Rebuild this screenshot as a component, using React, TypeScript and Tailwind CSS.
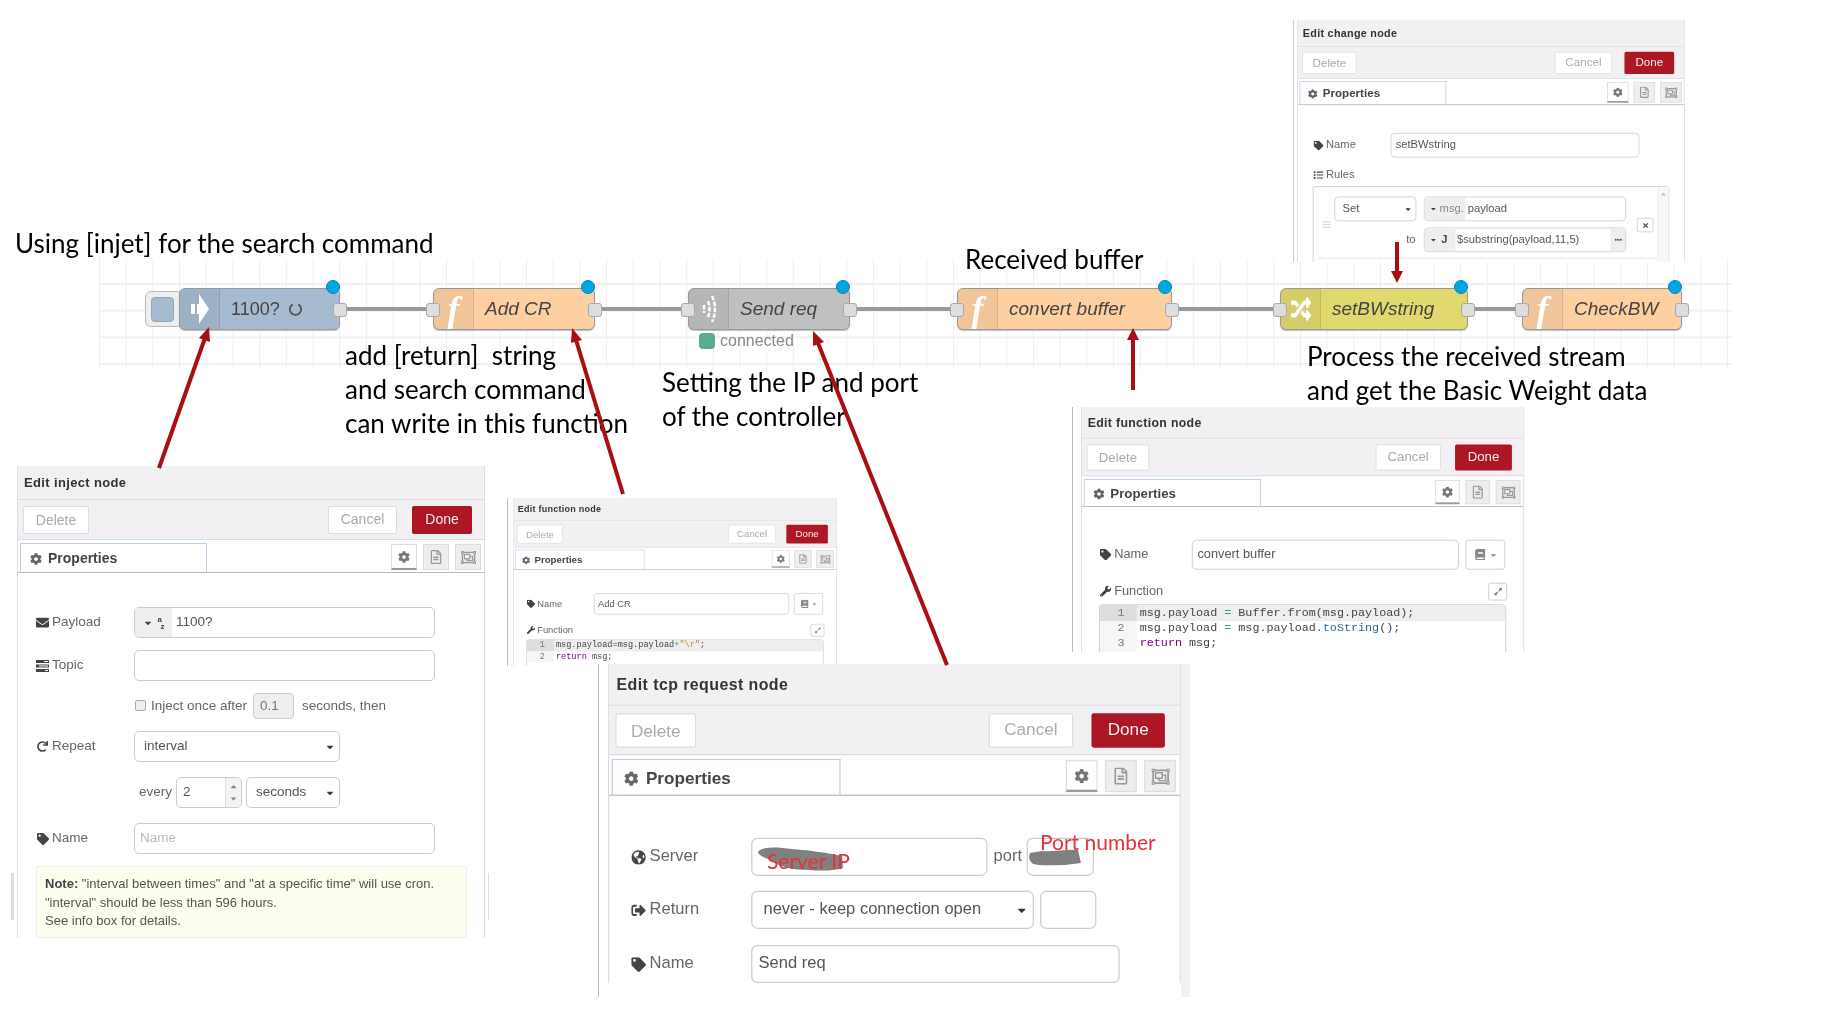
import type { ReactNode } from "react";
import {
  FaCaretDown, FaCaretUp, FaCog, FaEnvelope, FaRedo, FaTag, FaGlobeAmericas, FaSignOutAlt, FaWrench,
  FaBook, FaList, FaRegFileAlt, FaRegObjectGroup, FaRandom, FaTimes, FaEllipsisH, FaExpandAlt, FaBars,
} from "react-icons/fa";

const sans = "font-['Liberation_Sans',Arial,sans-serif]";

// One pasted "Edit ... node" window. Drawn at the inject window's size and scaled per copy.
function EditDialog({ title, box, scale, tabWidth = "w-[187px]", children }: {
  title: string; box: string; scale: string; tabWidth?: string; children: ReactNode;
}) {
  return (
    <div className={`absolute overflow-hidden bg-white ${box}`}>
      <div className={`w-[468px] origin-top-left bg-white border-x border-[#ddd] ${sans} ${scale}`}>
        <div className="h-[34px] bg-[#f3f0f4] border-b border-[#ddd] flex items-center pl-[6px] text-[13px] font-bold text-[#333] tracking-[0.35px]">
          {title}
        </div>
        <div className="h-[40px] bg-[#f3f0f4] border-b border-[#ddd] flex items-center justify-between pl-[5px] pr-[12px] text-[14px]">
          <div className="w-[66px] h-[28px] mt-[1px] bg-white border border-[#ddd] rounded-[2px] flex items-center justify-center text-[#aaa]">Delete</div>
          <div className="flex gap-[15px]">
            <div className="w-[69px] h-[28px] bg-white border border-[#ddd] rounded-[2px] flex items-center justify-center text-[#aaa]">Cancel</div>
            <div className="w-[60px] h-[28px] bg-[#ad1625] rounded-[2px] flex items-center justify-center text-[#eee]">Done</div>
          </div>
        </div>
        <div className="h-[33px] border-b border-[#b8bac2] flex justify-between pl-[2px] pr-[3px] pt-[3px]">
          <div className={`${tabWidth} h-[30px] border border-b-0 border-[#bcd0e8] flex items-center pl-[9px] gap-[6px] text-[14px] font-bold text-[#444]`}>
            <FaCog className="w-[12px] h-[12px] text-[#666]" /> Properties
          </div>
          <div className="flex gap-[6px] pt-[1px]">
            <div className="w-[26px] h-[26px] border border-[#ddd] border-b-2 border-b-[#999] flex items-center justify-center">
              <FaCog className="w-[12px] h-[12px] text-[#777]" />
            </div>
            <div className="w-[26px] h-[26px] border border-[#ddd] bg-[#eee] flex items-center justify-center">
              <FaRegFileAlt className="w-[12px] h-[14px] text-[#999]" />
            </div>
            <div className="w-[26px] h-[26px] border border-[#ddd] bg-[#eee] flex items-center justify-center">
              <FaRegObjectGroup className="w-[15px] h-[15px] text-[#999]" />
            </div>
          </div>
        </div>
        {children}
      </div>
    </div>
  );
}

function Label({ icon, text, width = "w-[98px]" }: { icon: ReactNode; text: string; width?: string }) {
  return (
    <div className={`${width} shrink-0 flex items-center gap-[3px] text-[13.5px] text-[#666]`}>
      <span className="w-[13px] flex justify-center text-[#444]">{icon}</span>
      {text}
    </div>
  );
}

function Field({ width, height = "h-[31px]", children, extra = "" }: { width: string; height?: string; children?: ReactNode; extra?: string }) {
  return (
    <div className={`${width} ${height} ${extra} bg-white border border-[#ccc] rounded-[5px] flex items-center text-[13.5px] text-[#555] overflow-hidden`}>
      {children}
    </div>
  );
}

function Select({ width, text }: { width: string; text: string }) {
  return (
    <Field width={width}>
      <div className="flex-1 flex items-center justify-between pl-[9px] pr-[4px]">
        {text}
        <FaCaretDown className="w-[10px] h-[10px] text-[#333]" />
      </div>
    </Field>
  );
}

function InjectForm() {
  return (
    <div className="pt-[34px] pl-[18px]">
      <div className="flex items-center">
        <Label icon={<FaEnvelope className="w-[13px] h-[13px]" />} text="Payload" />
        <Field width="w-[301px]">
          <div className="w-[37px] h-full bg-[#eee] flex items-center justify-center gap-[5px] text-[#444] mr-[4px]">
            <FaCaretDown className="w-[10px] h-[10px]" />
            <span className="flex flex-col text-[8px] leading-[7px] font-bold">
              <span>a</span>
              <span className="pl-[3px]">z</span>
            </span>
          </div>
          1100?
        </Field>
      </div>
      <div className="flex items-center mt-[12px]">
        <Label
          icon={
            <svg viewBox="0 0 13 12" className="w-[13px] h-[12px]" fill="currentColor">
              <path d="M0 0h13v3H0zM0 4.5h13v3H0zM0 9h13v3H0z" />
              <path d="M8 1h4v1H8zM3 5.5h9v1H3zM9 10h3v1H9z" fill="white" />
            </svg>
          }
          text="Topic"
        />
        <Field width="w-[301px]" />
      </div>
      <div className="flex items-center mt-[12px] h-[26px] pl-[98px] text-[13.5px] text-[#666] whitespace-nowrap">
        <div className="w-[11px] h-[11px] bg-[#eee] border border-[#aaa] rounded-[2px] ml-[1px] mb-[2px]" />
        <span className="ml-[5px] w-[102px]">Inject once after</span>
        <div className="w-[41px] h-[26px] bg-[#eee] border border-[#ccc] rounded-[4px] flex items-center pl-[6px] text-[#777]">0.1</div>
        <span className="ml-[8px]">seconds, then</span>
      </div>
      <div className="flex items-center mt-[12px]">
        <Label icon={<FaRedo className="w-[11px] h-[11px]" />} text="Repeat" />
        <Select width="w-[206px]" text="interval" />
      </div>
      <div className="flex items-center mt-[15px] pl-[103px] text-[13.5px] text-[#666]">
        <span className="w-[37px]">every</span>
        <Field width="w-[66px]" extra="justify-between">
          <span className="pl-[6px]">2</span>
          <div className="w-[16px] h-full bg-[#f3f3f3] border-l border-[#ddd] flex flex-col items-center justify-center gap-[3px] text-[#888]">
            <FaCaretUp className="w-[9px] h-[9px]" />
            <FaCaretDown className="w-[9px] h-[9px]" />
          </div>
        </Field>
        <div className="ml-[4px]">
          <Select width="w-[94px]" text="seconds" />
        </div>
      </div>
      <div className="flex items-center mt-[15px]">
        <Label icon={<FaTag className="w-[12px] h-[12px]" />} text="Name" />
        <Field width="w-[301px]">
          <span className="pl-[5px] text-[#bbb]">Name</span>
        </Field>
      </div>
      <div className="w-[431px] h-[72px] mt-[12px] bg-[#fefef0] border border-[#eee] rounded-[2px] px-[8px] pt-[8px] text-[13px] leading-[18.7px] text-[#555] whitespace-nowrap">
        <b className="text-[#444]">Note:</b> "interval between times" and "at a specific time" will use cron.
        <br />
        "interval" should be less than 596 hours.
        <br />
        See info box for details.
      </div>
    </div>
  );
}

function FunctionForm({ name, lines }: { name: string; lines: ReactNode[] }) {
  return (
    <div className="pt-[35px] pl-[18px]">
      <div className="flex items-center">
        <Label icon={<FaTag className="w-[12px] h-[12px]" />} text="Name" />
        <Field width="w-[282px]" height="h-[32px]">
          <span className="pl-[5px]">{name}</span>
        </Field>
        <div className="w-[42px] h-[32px] ml-[7px] bg-white border border-[#ccc] rounded-[3px] flex items-center justify-center gap-[3px] text-[#888]">
          <FaBook className="w-[13px] h-[12px]" />
          <FaCaretDown className="w-[9px] h-[9px]" />
        </div>
      </div>
      <div className="flex items-center justify-between w-[431px] h-[20px] mt-[13px]">
        <Label icon={<FaWrench className="w-[12px] h-[12px]" />} text="Function" />
        <div className="w-[20px] h-[19px] border border-[#ccc] rounded-[2px] flex items-center justify-center text-[#777]">
          <FaExpandAlt className="w-[9px] h-[9px]" />
        </div>
      </div>
      <div className="w-[430px] mt-[4px] border border-[#ccc] rounded-t-[4px] font-['Liberation_Mono',monospace] text-[12.4px] leading-[16.5px] text-[#444] h-[90px]">
        {lines.map((line, i) => (
          <div key={i} className={`flex ${i === 0 ? "bg-[#eee]" : ""}`}>
            <span className={`w-[39px] shrink-0 pr-[13px] text-right text-[#777] ${i === 0 ? "bg-[#ddd]" : "bg-[#f6f6f6]"}`}>{i + 1}</span>
            <span className="pl-[3px] whitespace-pre">{line}</span>
          </div>
        ))}
      </div>
    </div>
  );
}

function TcpForm() {
  return (
    <div className="pt-[34px] pl-[17px]">
      <div className="flex items-center">
        <Label icon={<FaGlobeAmericas className="w-[12px] h-[12px]" />} text="Server" width="w-[99px]" />
        <Field width="w-[193px]" />
        <span className="ml-[5px] w-[27px] text-[13.5px] text-[#666]">port</span>
        <Field width="w-[55px]" />
      </div>
      <div className="flex items-center mt-[12px]">
        <Label icon={<FaSignOutAlt className="w-[12px] h-[12px]" />} text="Return" width="w-[99px]" />
        <Select width="w-[231px]" text="never - keep connection open" />
        <Field width="w-[46px]" extra="ml-[5px]" />
      </div>
      <div className="flex items-center mt-[13px]">
        <Label icon={<FaTag className="w-[12px] h-[12px]" />} text="Name" width="w-[99px]" />
        <Field width="w-[301px]">
          <span className="pl-[5px]">Send req</span>
        </Field>
      </div>
    </div>
  );
}

function ChangeForm() {
  return (
    <div className="pt-[35px] pl-[18px]">
      <div className="flex items-center">
        <Label icon={<FaTag className="w-[12px] h-[12px]" />} text="Name" width="w-[94px]" />
        <Field width="w-[300px]">
          <span className="pl-[5px]">setBWstring</span>
        </Field>
      </div>
      <div className="mt-[13px] h-[18px] flex items-center">
        <Label icon={<FaList className="w-[12px] h-[12px]" />} text="Rules" />
      </div>
      <div className="w-[430px] h-[140px] mt-[5px] border border-[#ccc] rounded-[3px] flex">
        <div className="w-[415px]">
          <div className="flex pt-[12px] pb-[7px] ml-[5px] border-b border-[#ddd]">
            <div className="w-[20px] flex items-center justify-center text-[#ddd]">
              <FaBars className="w-[11px] h-[11px]" />
            </div>
            <div className="w-[352px] flex flex-col gap-[8px]">
              <div className="flex items-center">
                <Select width="w-[99px]" text="Set" />
                <Field width="w-[244px]" extra="ml-[9px]">
                  <div className="w-[49px] h-full bg-[#eee] flex items-center gap-[3px] pl-[6px] text-[#888] mr-[3px]">
                    <FaCaretDown className="w-[9px] h-[9px] text-[#444]" />
                    msg.
                  </div>
                  payload
                </Field>
              </div>
              <div className="flex items-center">
                <div className="w-[99px] pr-[1px] text-right text-[13.5px] text-[#666]">to</div>
                <Field width="w-[244px]" extra="ml-[9px]">
                  <div className="w-[37px] h-full bg-[#eee] flex items-center gap-[5px] pl-[6px] text-[#444] mr-[2px]">
                    <FaCaretDown className="w-[9px] h-[9px]" />
                    <b>J</b>
                  </div>
                  <span className="flex-1">$substring(payload,11,5)</span>
                  <div className="w-[18px] h-full bg-[#eee] flex items-center justify-center text-[#555]">
                    <FaEllipsisH className="w-[9px] h-[9px]" />
                  </div>
                </Field>
              </div>
            </div>
            <div className="w-[20px] h-[18px] mt-[27px] ml-[13px] border border-[#ccc] rounded-[2px] flex items-center justify-center text-[#555]">
              <FaTimes className="w-[9px] h-[9px]" />
            </div>
          </div>
        </div>
        <div className="flex-1 bg-[#f8f8f8] border-l border-[#eee] flex justify-center pt-[4px] text-[#bbb]">
          <FaCaretUp className="w-[10px] h-[10px]" />
        </div>
      </div>
    </div>
  );
}

// Node-RED flow node, placed on the canvas at its own coordinates
function FlowNode({ place, color, icon, label, italic = true, hasInput = true, children }: {
  place: string; color: string; icon: ReactNode; label: ReactNode; italic?: boolean; hasInput?: boolean; children?: ReactNode;
}) {
  return (
    <div className={`absolute top-[288px] h-[42px] ${place}`}>
      {children}
      <div className={`relative h-full flex rounded-[6px] border border-[#999] shadow-[0_1px_1px_rgba(0,0,0,0.25)] ${color}`}>
        <div className="w-[40px] shrink-0 flex items-center justify-center bg-black/5 border-r border-black/10 rounded-l-[5px] text-white">{icon}</div>
        <div className={`pl-[11px] flex items-center gap-[8px] text-[#444] whitespace-nowrap ${sans} ${italic ? "italic text-[19px]" : "text-[18px]"}`}>{label}</div>
      </div>
      {hasInput && <div className="absolute -left-[7px] top-[15px] w-[14px] h-[14px] bg-[#ddd] border border-[#aaa] rounded-[3px]" />}
      <div className="absolute -right-[7px] top-[15px] w-[14px] h-[14px] bg-[#ddd] border border-[#aaa] rounded-[3px]" />
      <div className="absolute right-0 -top-[8px] w-[14px] h-[14px] rounded-full bg-[#00a6e6] border border-[#0b7fb0]" />
    </div>
  );
}

const fnIcon = <span className="font-['Liberation_Serif',serif] italic font-bold text-[36px] leading-none">f</span>;

function Wire({ place }: { place: string }) {
  return <div className={`absolute top-[307px] h-[4px] bg-[#999] ${place}`} />;
}

function Note({ place, children }: { place: string; children: ReactNode }) {
  return <div className={`absolute font-['Lato',sans-serif] text-[26px] leading-[34px] text-black whitespace-pre ${place}`}>{children}</div>;
}

export default function App() {
  return (
    <div className="relative w-[1843px] h-[1021px] bg-white overflow-hidden blur-[0.35px]">
      {/* flow canvas */}
      <div className="absolute left-[99px] top-[258px] w-[1633px] h-[112px] bg-white bg-[linear-gradient(to_right,#eee_1px,transparent_1px),linear-gradient(to_bottom,#f0f0f0_2px,transparent_2px)] bg-[size:26.7px_26.7px] bg-[position:0px_25px]" />

      <EditDialog title="Edit change node" tabWidth="w-[177px]" box="left-[1293px] top-[20px] w-[397px] h-[242px] border-l border-[#ccc] pl-[3px]" scale="scale-x-[0.829] scale-y-[0.795]">
        <ChangeForm />
      </EditDialog>

      <Wire place="left-[347px] w-[80px]" />
      <Wire place="left-[602px] w-[80px]" />
      <Wire place="left-[857px] w-[94px]" />
      <Wire place="left-[1179px] w-[95px]" />
      <Wire place="left-[1475px] w-[41px]" />

      <FlowNode
        place="left-[179px] w-[161px]"
        color="bg-[#a6bbcf]"
        italic={false}
        hasInput={false}
        icon={
          <svg viewBox="0 0 18 32" className="w-[18px] h-[32px]" fill="white">
            <path d="M0 11h4v10H0zM6 11h2V1l10 15-10 15V21H6z" />
          </svg>
        }
        label={
          <>
            1100?
            <svg viewBox="0 0 16 16" className="w-[15px] h-[15px]" fill="none" stroke="#555" strokeWidth="2">
              <path d="M5 2.5a6 6 0 1 0 6 0" />
            </svg>
          </>
        }
      >
        <div className="absolute -left-[34px] top-[3px] w-[38px] h-[36px] bg-[#eee] border border-[#bbb] rounded-[6px] flex items-center pl-[5px]">
          <div className="w-[23px] h-[25px] bg-[#a6bbcf] border border-[#8fa5ba] rounded-[4px]" />
        </div>
      </FlowNode>
      <FlowNode place="left-[433px] w-[162px]" color="bg-[#fdd0a2]" icon={fnIcon} label="Add CR" />
      <FlowNode
        place="left-[688px] w-[162px]"
        color="bg-[#c0c0c0]"
        icon={
          <svg viewBox="0 0 14 32" className="w-[14px] h-[32px]" fill="none" stroke="white" strokeWidth="2.4" strokeDasharray="4.5 1.5">
            <path d="M2 12v8M6 8c2 5 2 11 0 16M10 3c4 8 4 18 0 26" />
          </svg>
        }
        label="Send req"
      >
        <div className="absolute left-[11px] top-[45px] flex items-center gap-[5px]">
          <div className="w-[16px] h-[16px] bg-[#5fa98e] rounded-[4px]" />
          <span className={`text-[16px] leading-[16px] text-[#888] ${sans}`}>connected</span>
        </div>
      </FlowNode>
      <FlowNode place="left-[957px] w-[215px]" color="bg-[#fdd0a2]" icon={fnIcon} label="convert buffer" />
      <FlowNode place="left-[1280px] w-[188px]" color="bg-[#e2d96e]" icon={<FaRandom className="w-[20px] h-[20px] scale-y-[1.35]" />} label="setBWstring" />
      <FlowNode place="left-[1522px] w-[160px]" color="bg-[#fdd0a2]" icon={fnIcon} label="CheckBW" />

      <Note place="left-[15px] top-[226px]">Using [injet] for the search command</Note>
      <Note place="left-[345px] top-[338px]">{"add [return]  string\nand search command\ncan write in this function"}</Note>
      <Note place="left-[662px] top-[365px]">{"Setting the IP and port\nof the controller"}</Note>
      <Note place="left-[965px] top-[242px]">Received buffer</Note>
      <Note place="left-[1307px] top-[339px]">{"Process the received stream\nand get the Basic Weight data"}</Note>

      <EditDialog title="Edit inject node" box="left-[17px] top-[466px] w-[468px] h-[474px]" scale="">
        <InjectForm />
      </EditDialog>
      <div className="absolute left-[11px] top-[873px] w-[3px] h-[47px] bg-[#ddd]" />
      <div className="absolute left-[488px] top-[873px] w-[1px] h-[47px] bg-[#ddd]" />

      <EditDialog title="Edit function node" box="left-[507px] top-[498px] w-[334px] h-[168px] border-l border-[#bbb] pl-[5px]" scale="scale-x-[0.692] scale-y-[0.67]">
        <FunctionForm
          name="Add CR"
          lines={[
            <>msg.payload=msg.payload<span className="text-[#2aa198]">+</span><span className="text-[#c9862b]">"\r"</span>;</>,
            <><span className="text-[#708]">return</span> msg;</>,
          ]}
        />
      </EditDialog>

      <EditDialog title="Edit function node" box="left-[1072px] top-[407px] w-[456px] h-[245px] border-l border-[#bbb] pl-[8px]" scale="scale-x-[0.947] scale-y-[0.935]">
        <FunctionForm
          name="convert buffer"
          lines={[
            <>msg.payload <span className="text-[#2aa198]">=</span> Buffer.from(msg.payload);</>,
            <>msg.payload <span className="text-[#2aa198]">=</span> msg.payload.<span className="text-[#369]">toString</span>();</>,
            <><span className="text-[#708]">return</span> msg;</>,
          ]}
        />
      </EditDialog>

      <EditDialog title="Edit tcp request node" box="left-[598px] top-[664px] w-[592px] h-[333px] border-l border-[#bbb] border-r-[9px] border-r-[#f3f0f4] pl-[9px]" scale="scale-x-[1.224] scale-y-[1.232]">
        <TcpForm />
      </EditDialog>

      {/* red arrows and the scribbled-out values */}
      <svg className="absolute left-0 top-0 pointer-events-none" width="1843" height="1021" viewBox="0 0 1843 1021">
        <path d="M758 852c4-6 20-5 34-3 14 1 30 3 50 7l1 12c-10 3-22 3-34 2-16 0-30-3-38-10-6-2-12-4-13-8z" fill="#808080" />
        <path d="M1030 853l12-2c10 1 26-2 36-1l3 13-16 2c-10 0-26 1-32-1-3-3-5-6-3-11z" fill="#808080" />
        <g stroke="#a90f12" strokeWidth="4" fill="none">
          <path d="M159 468L205 338" />
          <path d="M623 494L576 340" />
          <path d="M947 665L818 343" />
          <path d="M1133 390V338" />
          <path d="M1397 242V272" />
        </g>
        <g fill="#a90f12">
          <path d="M209 327l1 15-11-4z" />
          <path d="M572 328l10 12-11 3z" />
          <path d="M813 331l11 11-11 4z" />
          <path d="M1133 328l6 12h-12z" />
          <path d="M1397 283l-6-12h12z" />
        </g>
      </svg>
      <div className="absolute left-[767px] top-[847px] font-['Lato',sans-serif] text-[21px] leading-[28px] text-[#e5323b]">Server IP</div>
      <div className="absolute left-[1040px] top-[828px] font-['Lato',sans-serif] text-[21px] leading-[28px] text-[#e5323b]">Port number</div>
    </div>
  );
}
